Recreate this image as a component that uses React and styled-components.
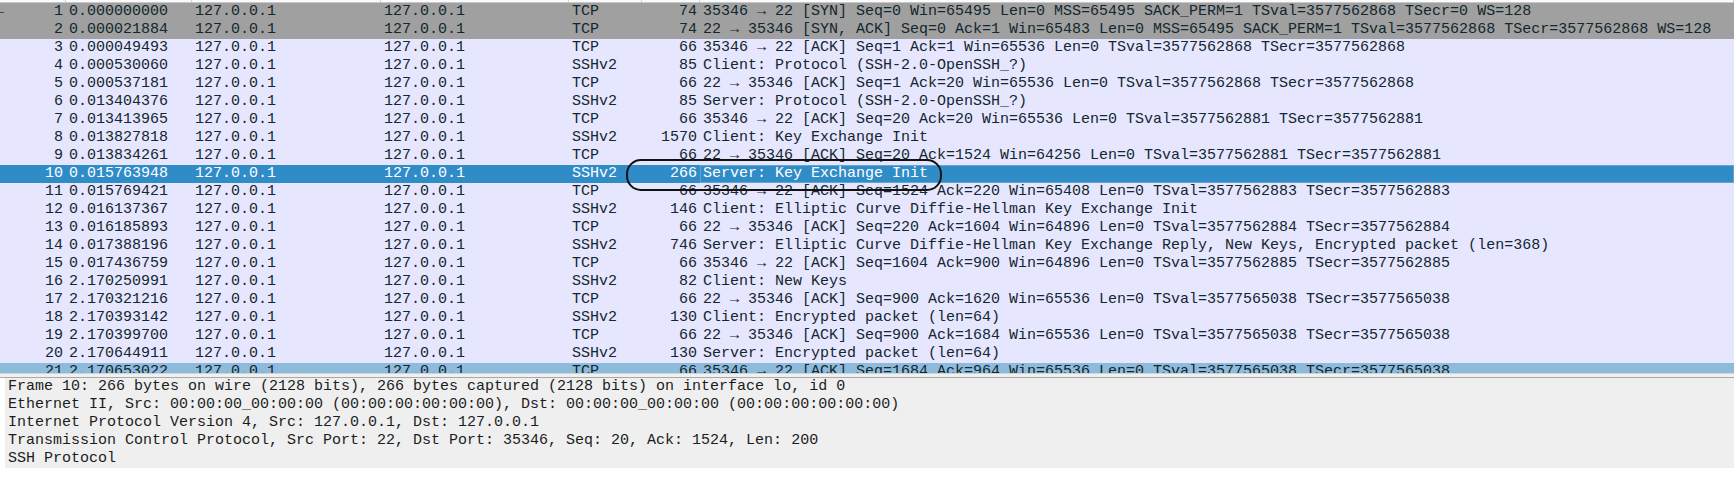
import styled, { createGlobalStyle } from "styled-components";

const GlobalStyle = createGlobalStyle`
  html, body {
    margin: 0;
    padding: 0;
    background: #ffffff;
  }
  body {
    font-family: "Liberation Mono", "DejaVu Sans Mono", monospace;
  }
`;

const packets = [
  ["1", "0.000000000", "TCP", "74", "35346 → 22 [SYN] Seq=0 Win=65495 Len=0 MSS=65495 SACK_PERM=1 TSval=3577562868 TSecr=0 WS=128", "syn"],
  ["2", "0.000021884", "TCP", "74", "22 → 35346 [SYN, ACK] Seq=0 Ack=1 Win=65483 Len=0 MSS=65495 SACK_PERM=1 TSval=3577562868 TSecr=3577562868 WS=128", "syn"],
  ["3", "0.000049493", "TCP", "66", "35346 → 22 [ACK] Seq=1 Ack=1 Win=65536 Len=0 TSval=3577562868 TSecr=3577562868"],
  ["4", "0.000530060", "SSHv2", "85", "Client: Protocol (SSH-2.0-OpenSSH_?)"],
  ["5", "0.000537181", "TCP", "66", "22 → 35346 [ACK] Seq=1 Ack=20 Win=65536 Len=0 TSval=3577562868 TSecr=3577562868"],
  ["6", "0.013404376", "SSHv2", "85", "Server: Protocol (SSH-2.0-OpenSSH_?)"],
  ["7", "0.013413965", "TCP", "66", "35346 → 22 [ACK] Seq=20 Ack=20 Win=65536 Len=0 TSval=3577562881 TSecr=3577562881"],
  ["8", "0.013827818", "SSHv2", "1570", "Client: Key Exchange Init"],
  ["9", "0.013834261", "TCP", "66", "22 → 35346 [ACK] Seq=20 Ack=1524 Win=64256 Len=0 TSval=3577562881 TSecr=3577562881"],
  ["10", "0.015763948", "SSHv2", "266", "Server: Key Exchange Init", "selected"],
  ["11", "0.015769421", "TCP", "66", "35346 → 22 [ACK] Seq=1524 Ack=220 Win=65408 Len=0 TSval=3577562883 TSecr=3577562883"],
  ["12", "0.016137367", "SSHv2", "146", "Client: Elliptic Curve Diffie-Hellman Key Exchange Init"],
  ["13", "0.016185893", "TCP", "66", "22 → 35346 [ACK] Seq=220 Ack=1604 Win=64896 Len=0 TSval=3577562884 TSecr=3577562884"],
  ["14", "0.017388196", "SSHv2", "746", "Server: Elliptic Curve Diffie-Hellman Key Exchange Reply, New Keys, Encrypted packet (len=368)"],
  ["15", "0.017436759", "TCP", "66", "35346 → 22 [ACK] Seq=1604 Ack=900 Win=64896 Len=0 TSval=3577562885 TSecr=3577562885"],
  ["16", "2.170250991", "SSHv2", "82", "Client: New Keys"],
  ["17", "2.170321216", "TCP", "66", "22 → 35346 [ACK] Seq=900 Ack=1620 Win=65536 Len=0 TSval=3577565038 TSecr=3577565038"],
  ["18", "2.170393142", "SSHv2", "130", "Client: Encrypted packet (len=64)"],
  ["19", "2.170399700", "TCP", "66", "22 → 35346 [ACK] Seq=900 Ack=1684 Win=65536 Len=0 TSval=3577565038 TSecr=3577565038"],
  ["20", "2.170644911", "SSHv2", "130", "Server: Encrypted packet (len=64)"],
  ["21", "2.170653022", "TCP", "66", "35346 → 22 [ACK] Seq=1684 Ack=964 Win=65536 Len=0 TSval=3577565038 TSecr=3577565038", "hover"],
];

const details = [
  "Frame 10: 266 bytes on wire (2128 bits), 266 bytes captured (2128 bits) on interface lo, id 0",
  "Ethernet II, Src: 00:00:00_00:00:00 (00:00:00:00:00:00), Dst: 00:00:00_00:00:00 (00:00:00:00:00:00)",
  "Internet Protocol Version 4, Src: 127.0.0.1, Dst: 127.0.0.1",
  "Transmission Control Protocol, Src Port: 22, Dst Port: 35346, Seq: 20, Ack: 1524, Len: 200",
  "SSH Protocol",
];

const rowColors = {
  syn: { bg: "#a0a0a0", fg: "#12272e" },
  selected: { bg: "#308cc6", fg: "#ffffff" },
  hover: { bg: "#8dbbdc", fg: "#12272e" },
  normal: { bg: "#e7e6ff", fg: "#12272e" },
};

const columns = "66px 126px 189px 188px 73px 58px 1fr";

const Window = styled.div`
  width: 1734px;
  height: 496px;
  display: flex;
  flex-direction: column;
  overflow: hidden;
  background: #ffffff;
  font-size: 15px;
`;

const PacketList = styled.div`
  position: relative;
  height: 373px;
  overflow: hidden;
  background: #ffffff;
  flex-shrink: 0;
`;

// column header is scrolled almost out of view: only its lower edge shows
const HeaderRow = styled.div`
  display: grid;
  grid-template-columns: ${columns};
  height: 3px;
  background: #fbfbfb;
  border-bottom: 1px solid #c8c8c8;
  box-sizing: border-box;
`;

const HeaderCell = styled.div`
  border-right: 1px solid #d2d2d2;
`;

const Row = styled.div`
  position: relative;
  display: grid;
  grid-template-columns: ${columns};
  height: 18px;
  line-height: 18px;
  background: ${(p) => rowColors[p.$kind].bg};
  color: ${(p) => rowColors[p.$kind].fg};
  white-space: nowrap;

  ${(p) =>
    p.$marker &&
    `
    &::before {
      content: "";
      position: absolute;
      left: 0;
      top: 9px;
      width: 4px;
      height: 1px;
      background: #4a4a4a;
    }
  `}
`;

const Cell = styled.div`
  padding: 0 3px;
  overflow: hidden;
  text-align: ${(p) => (p.$right ? "right" : "left")};
  box-sizing: border-box;
  ${(p) => p.$focus && "outline: 1px solid #63a6d6; outline-offset: -1px;"}
`;

const Annotation = styled.svg`
  position: absolute;
  left: 625px;
  top: 158px;
  pointer-events: none;
`;

const Splitter = styled.div`
  height: 5px;
  background: #f0f0f0;
  border-top: 1px solid #d4d4d4;
  border-bottom: 1px solid #a9a9a9;
  box-sizing: border-box;
  flex-shrink: 0;
`;

const DetailPane = styled.div`
  margin-left: 5px;
  background: #efefef;
  padding-left: 3px;
  color: #1c1c1c;
  flex-shrink: 0;
`;

const DetailLine = styled.div`
  height: 18px;
  line-height: 18px;
  white-space: nowrap;
`;

const App = () => {
  return (
    <Window>
      <GlobalStyle />
      <PacketList>
        <HeaderRow>
          {[0, 1, 2, 3, 4, 5, 6].map((i) => (
            <HeaderCell key={i} />
          ))}
        </HeaderRow>
        {packets.map(([no, time, proto, len, info, kind]) => (
          <Row key={no} $kind={kind || "normal"} $marker={no === "1"}>
            <Cell $right>{no}</Cell>
            <Cell>{time}</Cell>
            <Cell>127.0.0.1</Cell>
            <Cell>127.0.0.1</Cell>
            <Cell>{proto}</Cell>
            <Cell $right>{len}</Cell>
            <Cell $focus={kind === "selected"}>{info}</Cell>
          </Row>
        ))}
        <Annotation width="320" height="36" viewBox="0 0 320 36">
          <rect
            x="2"
            y="2"
            width="314"
            height="30"
            rx="14"
            ry="14"
            fill="none"
            stroke="#111111"
            strokeWidth="2"
          />
        </Annotation>
      </PacketList>
      <Splitter />
      <DetailPane>
        {details.map((line) => (
          <DetailLine key={line}>{line}</DetailLine>
        ))}
      </DetailPane>
    </Window>
  );
};

export default App;
